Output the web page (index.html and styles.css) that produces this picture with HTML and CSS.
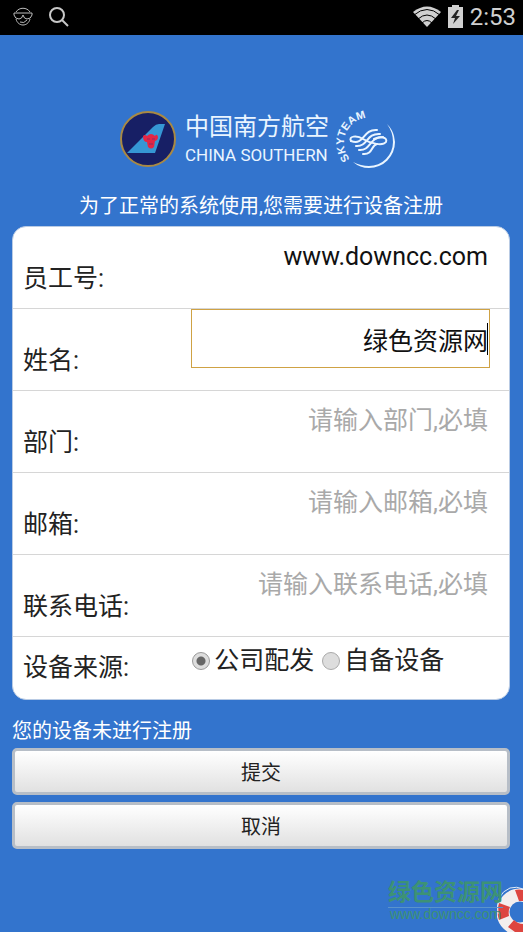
FILE: index.html
```html
<!DOCTYPE html>
<html lang="zh-CN">
<head>
	<meta charset="utf-8">
	<meta name="viewport" content="width=device-width, initial-scale=1">
	<title>设备注册</title>
	<link rel="stylesheet" href="styles.css">
</head>
<body>
	<div class="status-bar">
		<div class="status-left">
			<svg width="20" height="20" viewBox="0 0 20 20" fill="none" stroke="#bdbdbd" stroke-width="1">
				<path d="M3 5C6 0 14 0 17 5M3 12C5 20 15 20 17 12M7 15Q11 17 14 13"/>
				<path d="M1 6H19V8Q18 12 14 12Q11 12 10 8Q9 12 6 12Q2 12 1 8Z"/>
			</svg>
			<svg width="20" height="20" viewBox="0 0 20 20" fill="none" stroke="#c8c8c8" stroke-width="2">
				<circle cx="8" cy="8" r="7"/>
				<path d="M13 13L19 19"/>
			</svg>
		</div>
		<div class="status-right">
			<svg width="28" height="21" viewBox="0 0 28 21">
				<path d="M0 6Q14 -5 28 6L14 21Z" fill="#d0d0d0"/>
				<path d="M1 9Q14 -2 27 9M5 13Q14 5 23 13M9 17Q14 12 19 17" fill="none" stroke="#000" stroke-width="1"/>
			</svg>
			<svg width="15" height="23" viewBox="0 0 15 23">
				<path d="M4 0H11V2H15V23H0V2H4Z" fill="#d0d0d0"/>
				<path d="M9 5L3 13H7L5 19L12 11H8L11 5Z" fill="#222"/>
			</svg>
			<span class="clock">2:53</span>
		</div>
	</div>

	<div class="page">
		<div class="brand">
			<svg width="58" height="58" viewBox="0 0 58 58">
				<circle cx="29" cy="29" r="27" fill="#171f65" stroke="#a98943" stroke-width="2"/>
				<path d="M8 43L34 17Q37 14 40 14H46L36 43Z" fill="#3597d5"/>
				<path d="M24 26Q26 24 28 26Q32 22 36 26Q38 23 39 27Q39 30 36 31L35 37Q32 40 29 37L28 32Q24 32 24 26Z" fill="#e32645"/>
				<path d="M28 29H31M33 29H36M30 34H34" stroke="#8c2c62" stroke-width="1"/>
			</svg>
			<div class="brand-name">
				<span class="brand-cn">中国南方航空</span>
				<span class="brand-en">CHINA SOUTHERN</span>
			</div>
			<svg class="skyteam" width="60" height="60" viewBox="0 0 60 60">
				<path id="arc" d="M13 50A25 25 0 1 1 57 35" fill="none"/>
				<text><textPath href="#arc">SKYTEAM</textPath></text>
				<path d="M50 15A26 26 0 0 1 57 27L58 33A26 26 0 0 1 32 59Q23 59 16 53Q24 57 32 57A24 24 0 0 0 56 33Q56 23 50 15Z" fill="#eaf5ff"/>
				<g fill="none" stroke="#eaf5ff" stroke-width="2" stroke-linecap="round">
					<path d="M14 32C11 27 20 26 26 30C34 35 46 37 49 33C51 28 43 27 37 30"/>
					<path d="M14 32C28 37 25 20 40 21"/>
					<path d="M19 37C31 38 29 24 43 25"/>
					<path d="M22 41C34 42 32 28 46 28"/>
					<path d="M26 45C36 46 34 36 40 35"/>
				</g>
			</svg>
		</div>

		<p class="intro">为了正常的系统使用,您需要进行设备注册</p>

		<form>
			<div class="card">
				<div class="row">
					<label for="staff">员工号:</label>
					<div class="field"><input type="text" id="staff" value="www.downcc.com"></div>
				</div>
				<div class="row">
					<label for="name">姓名:</label>
					<div class="field active"><input type="text" id="name" value="绿色资源网"></div>
				</div>
				<div class="row">
					<label for="dept">部门:</label>
					<div class="field"><input type="text" id="dept" placeholder="请输入部门,必填"></div>
				</div>
				<div class="row">
					<label for="mail">邮箱:</label>
					<div class="field"><input type="email" id="mail" placeholder="请输入邮箱,必填"></div>
				</div>
				<div class="row">
					<label for="phone">联系电话:</label>
					<div class="field"><input type="tel" id="phone" placeholder="请输入联系电话,必填"></div>
				</div>
				<div class="row source" role="radiogroup" aria-labelledby="source">
					<span class="caption" id="source">设备来源:</span>
					<div class="options">
						<label><input type="radio" name="source" checked>公司配发</label>
						<label><input type="radio" name="source">自备设备</label>
					</div>
				</div>
			</div>

			<p class="notice">您的设备未进行注册</p>
			<button type="submit">提交</button>
			<button type="button">取消</button>
		</form>
	</div>

	<div class="watermark">
		<div class="mark-text">
			<strong>绿色资源网</strong>
			<span>www.downcc.com</span>
		</div>
		<svg width="26" height="46" viewBox="0 0 26 46">
			<circle cx="23" cy="26" r="17" fill="none" stroke="#f3eeee" stroke-width="13"/>
			<path d="M2 17L13 21Q11 25 12 30L2 34Q-1 25 2 17Z" fill="#dd4540"/>
			<path d="M18 4Q22 3 26 4V15L22 15Z" fill="#dd4540"/>
			<path d="M11 41L17 34Q21 38 26 38V46H18Z" fill="#dd4540"/>
			<path d="M1 28Q-2 8 13 2Q20 0 26 3" fill="none" stroke="#dfeaf7" stroke-width="1"/>
		</svg>
	</div>
</body>
</html>
```
FILE: styles.css
```css
* {
	box-sizing: border-box;
	margin: 0;
	padding: 0;
}

body {
	position: relative;
	min-height: 100vh;
	background-color: #3374cd;
	color: #222;
	font-family: Roboto, "Noto Sans CJK SC", sans-serif;
	font-size: 25px;
}

.status-bar {
	display: flex;
	justify-content: space-between;
	align-items: center;
	height: 35px;
	padding: 0 7px 2px 13px;
	background-color: #000;
}

.status-left {
	display: flex;
	gap: 16px;
}

.status-right {
	display: flex;
	align-items: center;
	gap: 7px;
}

.clock {
	color: #d0d0d0;
	font-size: 24px;
	line-height: 32px;
}

.page {
	padding: 74px 13px 0 12px;
}

.brand {
	display: flex;
	justify-content: center;
	align-items: center;
	gap: 8px;
	padding-right: 6px;
	height: 60px;
}

.brand-name {
	display: flex;
	flex-direction: column;
	color: #eaf5ff;
}

.brand-cn {
	font-size: 24px;
	line-height: 32px;
}

.brand-en {
	font-size: 17px;
	line-height: 24px;
}

.skyteam {
	overflow: visible;
}

.skyteam text {
	fill: #eaf5ff;
	font-family: "Liberation Sans", sans-serif;
	font-size: 11px;
	font-weight: bold;
}

.intro {
	padding-top: 22px;
	color: #fff;
	font-size: 20px;
	line-height: 30px;
	text-align: center;
}

.card {
	margin-top: 5px;
	border: 1px solid #b9cbe4;
	border-radius: 14px;
	background-color: #fff;
	overflow: hidden;
}

.row {
	display: flex;
	justify-content: space-between;
	height: 82px;
	padding: 0 19px 0 10px;
	border-bottom: 1px solid #d6d6d6;
}

.row > label {
	padding-top: 33px;
	line-height: 38px;
}

.field {
	position: relative;
	width: 64%;
	height: 59px;
	border: 1px solid transparent;
}

.field.active {
	border-color: #cfa244;
}

/* text cursor of the active field */
.field.active::after {
	content: "";
	position: absolute;
	top: 13px;
	right: 1px;
	width: 1px;
	height: 32px;
	background-color: #000;
}

.field input {
	width: 100%;
	height: 100%;
	padding-right: 1px;
	border: 0;
	outline: 0;
	background: none;
	color: #111;
	font: inherit;
	text-align: right;
}

.field input::placeholder {
	color: #a9a9a9;
}

.row.source {
	height: 62px;
	border-bottom: 0;
}

.caption {
	padding-top: 12px;
	line-height: 38px;
}

.options {
	display: flex;
	align-items: flex-start;
	gap: 8px;
	width: 64%;
	padding: 5px 0 0 1px;
	line-height: 38px;
	white-space: nowrap;
}

.options label {
	display: flex;
	align-items: center;
	gap: 4px;
}

.options input {
	appearance: none;
	width: 18px;
	height: 18px;
	border: 1px solid #aaa;
	border-radius: 50%;
	background: #ddd;
}

.options input:checked {
	border-color: #999;
	background: radial-gradient(circle, #666 0 4px, #ddd 5px);
}

.notice {
	padding-top: 16px;
	color: #fff;
	font-size: 20px;
	line-height: 30px;
}

button {
	display: block;
	width: 100%;
	height: 47px;
	margin-top: 2px;
	border: 3px solid #b7bec7;
	border-radius: 5px;
	background: linear-gradient(#fff, #e1e1e1);
	color: #222;
	font-family: inherit;
	font-size: 20px;
}

button + button {
	margin-top: 7px;
}

.watermark {
	position: absolute;
	right: 0;
	bottom: 0;
	display: flex;
	align-items: flex-end;
}

.mark-text {
	display: flex;
	flex-direction: column;
	z-index: 1;
	margin-right: -6px;
	padding-bottom: 11px;
	color: #3d9275;
}

.mark-text strong {
	border-bottom: 1px solid #5a93cb;
	font-size: 23px;
	line-height: 28px;
}

.mark-text span {
	padding-left: 2px;
	font-family: "Liberation Sans", sans-serif;
	font-size: 14px;
	line-height: 13px;
}
```
